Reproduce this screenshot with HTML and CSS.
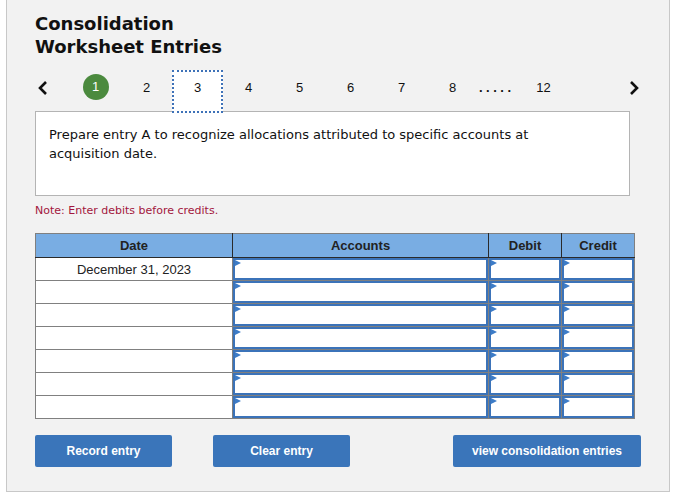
FILE: index.html
```html
<!DOCTYPE html>
<html lang="en">
<head>
    <meta charset="UTF-8">
    <title>Consolidation Worksheet Entries</title>
    <link rel="stylesheet" href="styles.css">
</head>
<body>
<div class="panel">
    <h1 class="title">Consolidation<br>Worksheet Entries</h1>

    <div class="pager">
        <span class="arrow">
            <svg width="12" height="16" viewBox="0 0 12 16"><polyline points="9,2 3,8 9,14" fill="none" stroke="#111" stroke-width="2.6"/></svg>
        </span>
        <span class="page"><span class="done">1</span></span>
        <span class="page">2</span>
        <span class="page current">3</span>
        <span class="page">4</span>
        <span class="page">5</span>
        <span class="page">6</span>
        <span class="page">7</span>
        <span class="page">8</span>
        <span class="dots">.....</span>
        <span class="page">12</span>
        <span class="arrow right">
            <svg width="12" height="16" viewBox="0 0 12 16"><polyline points="3,2 9,8 3,14" fill="none" stroke="#111" stroke-width="2.6"/></svg>
        </span>
    </div>

    <div class="prompt">
        Prepare entry A to recognize allocations attributed to specific accounts at acquisition date.
    </div>

    <p class="note">Note: Enter debits before credits.</p>

    <table class="entries">
        <tr>
            <th class="c-date">Date</th>
            <th class="c-acct">Accounts</th>
            <th class="c-num">Debit</th>
            <th class="c-num">Credit</th>
        </tr>
        <tr>
            <td class="date">December 31, 2023</td>
            <td class="in"><div class="box"></div></td>
            <td class="in"><div class="box"></div></td>
            <td class="in"><div class="box"></div></td>
        </tr>
        <tr>
            <td class="date"></td>
            <td class="in"><div class="box"></div></td>
            <td class="in"><div class="box"></div></td>
            <td class="in"><div class="box"></div></td>
        </tr>
        <tr>
            <td class="date"></td>
            <td class="in"><div class="box"></div></td>
            <td class="in"><div class="box"></div></td>
            <td class="in"><div class="box"></div></td>
        </tr>
        <tr>
            <td class="date"></td>
            <td class="in"><div class="box"></div></td>
            <td class="in"><div class="box"></div></td>
            <td class="in"><div class="box"></div></td>
        </tr>
        <tr>
            <td class="date"></td>
            <td class="in"><div class="box"></div></td>
            <td class="in"><div class="box"></div></td>
            <td class="in"><div class="box"></div></td>
        </tr>
        <tr>
            <td class="date"></td>
            <td class="in"><div class="box"></div></td>
            <td class="in"><div class="box"></div></td>
            <td class="in"><div class="box"></div></td>
        </tr>
        <tr>
            <td class="date"></td>
            <td class="in"><div class="box"></div></td>
            <td class="in"><div class="box"></div></td>
            <td class="in"><div class="box"></div></td>
        </tr>
    </table>

    <div class="actions">
        <button class="btn btn-record">Record entry</button>
        <button class="btn btn-clear">Clear entry</button>
        <button class="btn btn-view">view consolidation entries</button>
    </div>
</div>
</body>
</html>
```

FILE: styles.css
```css
body {
    margin: 0;
    padding: 0;
    background: #ffffff;
    font-family: "DejaVu Sans", Verdana, sans-serif;
    color: #111;
}
.panel {
    margin-left: 6px;
    width: 664px;
    height: 492px;
    box-sizing: border-box;
    background: #f2f2f2;
    border: 1px solid #c8c8c8;
    border-top: none;
    padding: 12px 0 0 28px;
}
.title {
    margin: 0;
    font-size: 18px;
    line-height: 23px;
    font-weight: bold;
    color: #111;
}

/* pager */
.pager {
    display: flex;
    align-items: flex-start;
    height: 41px;
    margin-top: 12px;
    font-family: "Liberation Sans", Arial, sans-serif;
    font-size: 13px;
    color: #111;
}
.arrow {
    width: 35px;
    height: 35px;
    display: flex;
    align-items: center;
    padding-left: 2px;
    box-sizing: border-box;
}
.arrow.right {
    margin-left: 57px;
}
.page {
    width: 51px;
    height: 35px;
    line-height: 35px;
    text-align: center;
    box-sizing: border-box;
}
.page.current {
    height: 43px;
    border: 2px dotted #3e72b8;
    background: #ffffff;
    line-height: 31px;
    position: relative;
    z-index: 1;
}
.done {
    display: inline-block;
    width: 26px;
    height: 26px;
    line-height: 26px;
    border-radius: 50%;
    background: #4b8a3e;
    color: #ffffff;
    vertical-align: middle;
    margin-top: -3px;
}
.dots {
    width: 40px;
    height: 35px;
    line-height: 35px;
    font-weight: bold;
    letter-spacing: 3.5px;
    padding-left: 1px;
    box-sizing: border-box;
}

/* question */
.prompt {
    width: 595px;
    height: 85px;
    box-sizing: border-box;
    background: #ffffff;
    border: 1px solid #b4b4b4;
    padding: 13px 60px 0 13px;
    font-size: 13px;
    line-height: 19px;
    color: #111;
}
.note {
    margin: 8px 0 0 0;
    font-size: 11px;
    line-height: 14px;
    color: #a3163d;
}

/* table */
.entries {
    margin-top: 15px;
    width: 599px;
    border-collapse: collapse;
    font-family: "Liberation Sans", Arial, sans-serif;
    font-size: 13px;
    background: #ffffff;
    table-layout: fixed;
}
.entries th {
    height: 23px;
    padding: 0;
    background: #79ade3;
    color: #222;
    font-weight: bold;
    border: 1px solid #2a2a2a;
    border-top-color: #808080;
    border-left-color: #808080;
}
.entries th.c-num:last-child {
    border-right-color: #808080;
}
.c-date { width: 196px; }
.c-acct { width: 255px; }
.c-num { width: 72px; }
.entries td {
    height: 22px;
    padding: 0;
    border: 1px solid #808080;
    color: #222;
}
.entries td.date {
    text-align: center;
}
.box {
    position: relative;
    height: 22px;
    box-sizing: border-box;
    border: 2px solid #3b73b9;
}
.box::before {
    content: "";
    position: absolute;
    top: 0;
    left: 0;
    border-top: 3px solid transparent;
    border-bottom: 3px solid transparent;
    border-left: 6px solid #3d7cc7;
}

/* buttons */
.actions {
    display: flex;
    margin-top: 16px;
}
.btn {
    height: 32px;
    border: none;
    border-radius: 2px;
    background: #3a75ba;
    color: #ffffff;
    font-family: "Liberation Sans", Arial, sans-serif;
    font-weight: bold;
    font-size: 12px;
    padding: 0;
}
.btn-record { width: 137px; }
.btn-clear { width: 137px; margin-left: 41px; }
.btn-view { width: 188px; margin-left: 103px; }
```
